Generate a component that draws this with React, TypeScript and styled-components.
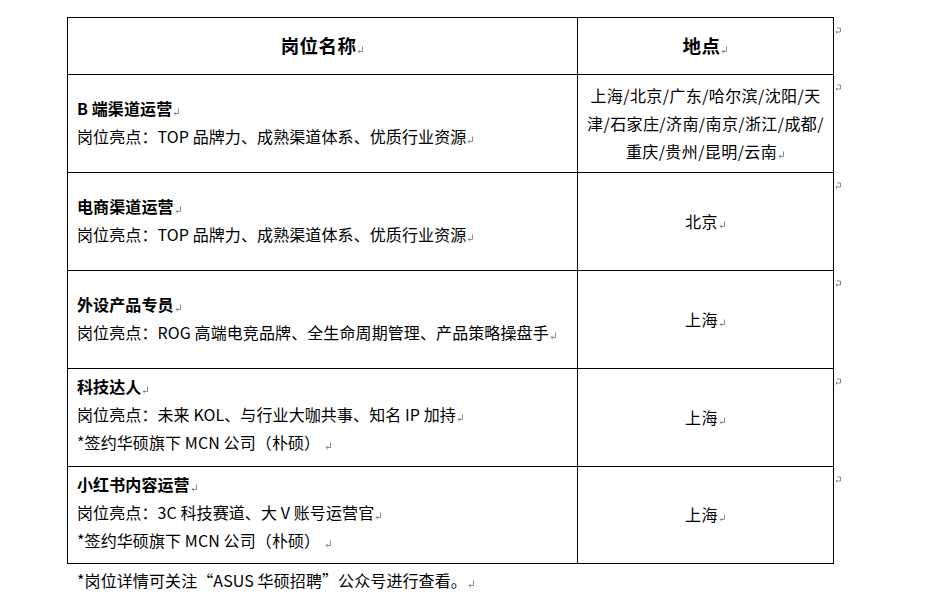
import React from "react";
import styled, { createGlobalStyle } from "styled-components";

const Global = createGlobalStyle`
  html, body { margin: 0; padding: 0; background: #fff; }
  body { font-family: "Noto Sans CJK SC", "Noto Sans", sans-serif; color: #000; }
`;

const Page = styled.div`
  padding: 17px 0 0 67px;
`;

const Table = styled.div`
  display: grid;
  grid-template-columns: 509px 255px;
  grid-template-rows: 56px repeat(4, 97px) 96px;
  gap: 1px;
  padding: 1px;
  background: #000;
  width: 767px;
  box-sizing: border-box;
`;

const Cell = styled.div<{ $center?: boolean; $head?: boolean; $lift?: number }>`
  position: relative;
  background: #fff;
  display: flex;
  flex-direction: column;
  justify-content: center;
  align-items: ${(p) => (p.$center ? "center" : "flex-start")};
  text-align: ${(p) => (p.$center ? "center" : "left")};
  padding: 0 0 ${(p) => p.$lift ?? 2}px ${(p) => (p.$center ? 0 : 9)}px;
  font-size: ${(p) => (p.$head ? "18.5px" : "16px")};
  font-weight: ${(p) => (p.$head ? 700 : 400)};
  letter-spacing: ${(p) => (p.$head ? "0.4px" : p.$center ? "0.4px" : "0.1px")};
  line-height: 28px;
  white-space: nowrap;
`;

const Line = styled.div<{ $bold?: boolean }>`
  font-weight: ${(p) => (p.$bold ? 700 : "inherit")};
`;

const MarkSvg = styled.svg`
  display: inline-block;
  width: 7px;
  height: 8px;
  margin-left: 1px;
  vertical-align: -1px;
`;

const Mark = () => (
  <MarkSvg viewBox="0 0 7 8">
    <path d="M5.5 0.5 V5.5 H1.2" fill="none" stroke="#8a8a8a" strokeWidth="1" />
    <path d="M2.8 3.8 L1.1 5.5 L2.8 7.2" fill="none" stroke="#8a8a8a" strokeWidth="1" />
  </MarkSvg>
);

const RowEndSvg = styled.svg`
  position: absolute;
  right: -9px;
  top: 9px;
  width: 6px;
  height: 7px;
`;

const RowEnd = () => (
  <RowEndSvg viewBox="0 0 6 7">
    <path d="M1 1 H4.5 V5 H0.5 M0.5 3.8 V6.5" fill="none" stroke="#8a8a8a" strokeWidth="1" />
  </RowEndSvg>
);

const Note = styled.div`
  margin: 2px 0 0 10px;
  font-size: 16px;
  letter-spacing: 0.1px;
  line-height: 28px;
  white-space: nowrap;
`;

type Row = { title: string; lines: string[]; place: string[] };

const rows: Row[] = [
  {
    title: "B 端渠道运营",
    lines: ["岗位亮点：TOP 品牌力、成熟渠道体系、优质行业资源"],
    place: ["上海/北京/广东/哈尔滨/沈阳/天", "津/石家庄/济南/南京/浙江/成都/", "重庆/贵州/昆明/云南"],
  },
  {
    title: "电商渠道运营",
    lines: ["岗位亮点：TOP 品牌力、成熟渠道体系、优质行业资源"],
    place: ["北京"],
  },
  {
    title: "外设产品专员",
    lines: ["岗位亮点：ROG 高端电竞品牌、全生命周期管理、产品策略操盘手"],
    place: ["上海"],
  },
  {
    title: "科技达人",
    lines: ["岗位亮点：未来 KOL、与行业大咖共事、知名 IP 加持", "*签约华硕旗下 MCN 公司（朴硕）"],
    place: ["上海"],
  },
  {
    title: "小红书内容运营",
    lines: ["岗位亮点：3C 科技赛道、大 V 账号运营官", "*签约华硕旗下 MCN 公司（朴硕）"],
    place: ["上海"],
  },
];

export default function App() {
  return (
    <>
      <Global />
      <Page>
        <Table>
          <Cell $center $head>
            <Line>
              岗位名称
              <Mark />
            </Line>
          </Cell>
          <Cell $center $head>
            <Line>
              地点
              <Mark />
            </Line>
            <RowEnd />
          </Cell>
          {rows.map((r, i) => (
            <React.Fragment key={i}>
              <Cell $lift={r.lines.length > 1 ? 7 : 3}>
                <Line $bold>
                  {r.title}
                  <Mark />
                </Line>
                {r.lines.map((l, j) => (
                  <Line key={j}>
                    {l}
                    {j === r.lines.length - 1 && r.lines.length > 1 ? " " : ""}
                    <Mark />
                  </Line>
                ))}
              </Cell>
              <Cell $center>
                {r.place.map((p, j) => (
                  <Line key={j}>
                    {p}
                    {j === r.place.length - 1 ? <Mark /> : null}
                  </Line>
                ))}
                <RowEnd />
              </Cell>
            </React.Fragment>
          ))}
        </Table>
        <Note>
          *岗位详情可关注“ASUS 华硕招聘”公众号进行查看。
          <Mark />
        </Note>
      </Page>
    </>
  );
}
